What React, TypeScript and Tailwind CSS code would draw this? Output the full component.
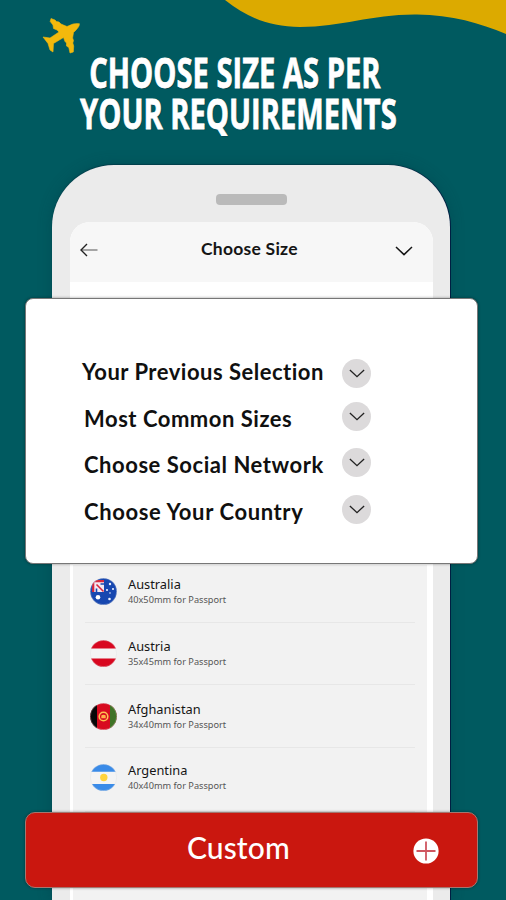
import { ReactNode } from "react";

const sections = [
    { label: "Your Previous Selection", style: "pl-[56px] pt-[58px]", text: "tracking-[0.5px]" },
    { label: "Most Common Sizes", style: "pl-[58px] pt-[17px]", text: "tracking-[0.52px]" },
    { label: "Choose Social Network", style: "pl-[58px] pt-[16px]", text: "tracking-[0.54px]" },
    { label: "Choose Your Country", style: "pl-[58px] pt-[17px]", text: "tracking-[0.62px]" },
];

const Flag = ({ id, children }: { id: string; children: ReactNode }) => (
    <svg className="w-[27px] h-[27px] shrink-0" viewBox="0 0 27 27">
        <clipPath id={id}>
            <circle cx="13.5" cy="13.5" r="13.3" />
        </clipPath>
        <g clipPath={`url(#${id})`}>{children}</g>
        <circle cx="13.5" cy="13.5" r="13.2" fill="none" stroke="#d8d8d8" strokeWidth=".3" />
    </svg>
);

const countries = [
    {
        name: "Australia",
        size: "40x50mm for Passport",
        row: "h-[58px] pt-[13px]",
        flag: (
            <Flag id="au">
                <path fill="#1747b0" d="M0 0h27v27H0z" />
                <path fill="#f3e9f2" d="M3 3h11v11H3z" />
                <path stroke="#d8283c" strokeWidth="2.2" d="M4 3.2h10M3.2 4v10" fill="none" />
                <path stroke="#d8283c" strokeWidth="1.6" d="M6.5 6.5l7 7" />
                <path stroke="#1747b0" strokeWidth="1.6" d="M6.5 10.5v3.5M10.5 6h3.5" />
                <circle cx="8" cy="19.3" r="2.3" fill="#fff" />
                <g fill="#e8efff">
                    <circle cx="20" cy="6" r="1.2" />
                    <circle cx="17" cy="12" r="1.1" />
                    <circle cx="23" cy="11" r="1.1" />
                    <circle cx="20" cy="15" r=".8" />
                    <circle cx="19.5" cy="21" r="1.3" />
                </g>
            </Flag>
        ),
    },
    {
        name: "Austria",
        size: "35x45mm for Passport",
        row: "h-[62px] pt-[17px]",
        flag: (
            <Flag id="at">
                <path fill="#f4f4f4" d="M0 0h27v27H0z" />
                <path fill="#d8071f" d="M0 0h27v8.5H0zM0 18.5h27V27H0z" />
            </Flag>
        ),
    },
    {
        name: "Afghanistan",
        size: "34x40mm for Passport",
        row: "h-[63px] pt-[18px]",
        flag: (
            <Flag id="af">
                <path fill="#d80b20" d="M0 0h27v27H0z" />
                <path fill="#080808" d="M0 0h7v27H0z" />
                <path fill="#3f7326" d="M20 0h7v27h-7z" />
                <circle cx="13.5" cy="13.5" r="4.3" fill="none" stroke="#ffc052" strokeWidth="1.6" />
                <path d="M11.3 12.5q2.2-1.7 4.4 0v2.7h-4.4z" fill="#ffb34a" />
            </Flag>
        ),
    },
    {
        name: "Argentina",
        size: "40x40mm for Passport",
        row: "h-[64px] pt-[16px]",
        flag: (
            <Flag id="ar">
                <path fill="#f4f4f4" d="M0 0h27v27H0z" />
                <path fill="#3a8be8" d="M0 0h27v7.7H0zM0 20h27v7H0z" />
                <circle cx="13.8" cy="13.5" r="3.7" fill="#ffd33e" />
            </Flag>
        ),
    },
];

const Chevron = ({ className }: { className: string }) => (
    <svg className={className} viewBox="0 0 18 10" fill="none">
        <path d="M1 1l8 7.6L17 1" stroke="currentColor" strokeWidth="1.5" />
    </svg>
);

const Header = () => (
    <div className="flex h-[60px] items-start bg-[#f7f7f7] pl-[10px] pr-[20px] text-[#151515]">
        <svg className="mt-[21px] h-[14px] w-[18px]" viewBox="0 0 18 14" fill="none">
            <path d="M17.5 7H1" stroke="#555" strokeWidth="1.1" />
            <path d="M7 1L1 7l6 6" stroke="#222" strokeWidth="1.4" />
        </svg>
        <h2 className="ml-[103px] mt-[15px] flex-1 whitespace-nowrap text-[17.5px] leading-[24px] font-bold tracking-[0.25px]">
            Choose Size
        </h2>
        <Chevron className="mt-[24px] h-[10px] w-[18px]" />
    </div>
);

const Phone = () => (
    <div className="mx-auto mt-[32px] flex h-[736px] w-[398px] -translate-x-[2px] flex-col rounded-t-[62px] bg-[#ebebeb] pt-[29px] shadow-[1px_0_0_#001f42,0_-1px_1px_#003f4b,0_0_14px_#003c4666]">
        <div className="mx-auto h-[11px] w-[71px] rounded-[4px] bg-[#bababa]" />
        <div className="ml-[18px] mr-[17px] mt-[17px] flex flex-1 flex-col overflow-hidden rounded-t-[20px] bg-white">
            <Header />
            <div className="ml-[3px] mr-[6px] mt-[283px] flex-1 bg-[#f2f2f2] px-[12px]">
                {countries.map((c) => (
                    <div
                        key={c.name}
                        className={`flex items-start border-b border-[#e7e7e7] pl-[5px] font-['Noto_Sans',sans-serif] ${c.row}`}
                    >
                        {c.flag}
                        <div className="ml-[11px] -mt-[2px] whitespace-nowrap">
                            <p className="text-[12.8px] leading-[16px] text-[#151515]">{c.name}</p>
                            <p className="mt-[1px] text-[9.2px] leading-[14px] text-[#555]">{c.size}</p>
                        </div>
                    </div>
                ))}
            </div>
        </div>
    </div>
);

const SectionCard = () => (
    <div className="absolute left-[25px] top-[298px] flex h-[266px] w-[453px] rounded-[8px] border border-[#777] bg-white shadow-[0_0_3px_#0006]">
        <div className="w-[316px] shrink-0">
            {sections.map((s) => (
                <p
                    key={s.label}
                    className={`whitespace-nowrap text-[22px] leading-[30px] font-bold text-[#101010] ${s.style} ${s.text}`}
                >
                    {s.label}
                </p>
            ))}
        </div>
        <div className="flex flex-col pt-[60px] text-[#222]">
            {["mb-[14px]", "mb-[17px]", "mb-[18px]", ""].map((gap, i) => (
                <div
                    key={i}
                    className={`flex h-[29px] w-[29px] items-center justify-center rounded-full bg-[#dcdadb] ${gap}`}
                >
                    <Chevron className="h-[9px] w-[16px]" />
                </div>
            ))}
        </div>
    </div>
);

const CustomButton = () => (
    <button className="absolute left-[25px] top-[812px] flex h-[76px] w-[453px] rounded-[10px] border border-[#a47770] bg-[#ca170f] text-white shadow-[0_0_3px_#0006]">
        <span className="ml-[161px] mt-[14px] w-[226px] text-left text-[30px] leading-[40px] font-medium tracking-[0.1px]">
            Custom
        </span>
        <svg className="mt-[25px] h-[26px] w-[26px]" viewBox="0 0 26 26">
            <circle cx="13" cy="13" r="12.6" fill="#fff" />
            <path d="M13 3.5v19M3.5 13h19" stroke="#cf5660" strokeWidth="1.8" />
        </svg>
    </button>
);

export default function App() {
    return (
        <main className="relative h-[900px] w-[506px] overflow-hidden bg-[#005a60] font-['Lato',sans-serif]">
            <svg className="absolute left-0 top-0 h-[60px] w-[506px]" viewBox="0 0 506 60">
                <path
                    d="M225 0C248 18 270 27 300 27C342 27 372 14 417 14.5C452 15 480 23 506 34V0Z"
                    fill="#dcaa00"
                />
                <path
                    d="M51 18.5L55 20L56.5 21.5L59 22L61 24L67 26.5Q74 22.5 79.4 23.7Q80 26.5 73.5 32.5L72.6 38L73.5 40.5L72.8 43L73.7 46L73.3 52L70 53L68.8 47.5L66.5 46L66.5 43L65 41.5L63.5 37.5L53.5 43.5L53 52L50 50L48 43.5L43 37L50 38L59 32L57 30L53.5 28.5L53 25L50.2 21.5Z"
                    fill="#f3b90c"
                    stroke="#f3b90c"
                    strokeWidth=".6"
                    strokeLinejoin="round"
                />
            </svg>
            <h1 className="ml-[80px] w-max origin-left scale-x-[0.711] whitespace-nowrap pt-[52px] indent-[13px] font-['Open_Sans',sans-serif] text-[41px] leading-[40.5px] font-bold text-white [text-shadow:1px_1px_1px_#003c46] [-webkit-text-stroke:0.8px_white]">
                CHOOSE SIZE AS PER
                <br />
                YOUR REQUIREMENTS
            </h1>
            <Phone />
            <SectionCard />
            <CustomButton />
        </main>
    );
}
